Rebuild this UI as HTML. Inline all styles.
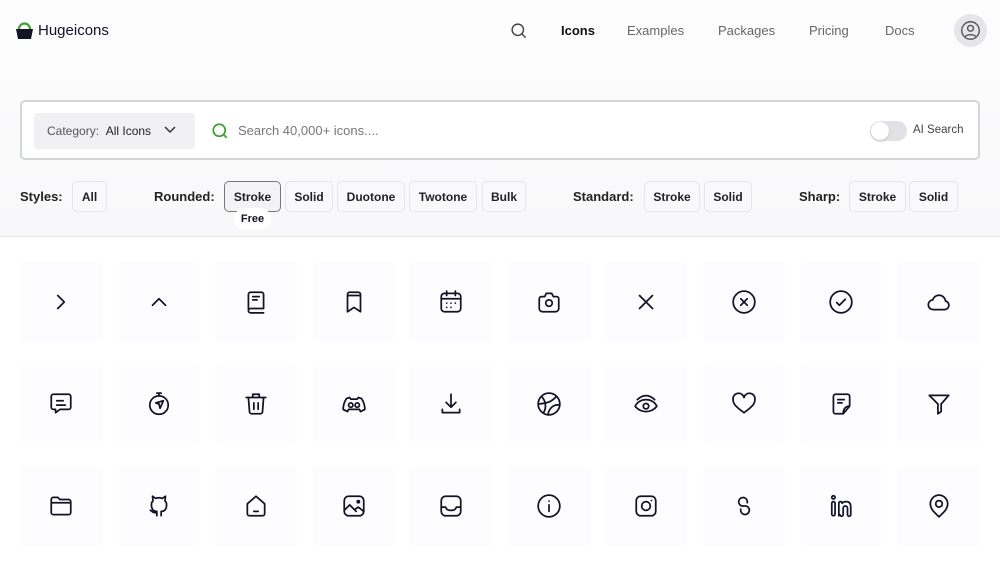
<!DOCTYPE html>
<html><head><meta charset="utf-8"><style>
*{margin:0;padding:0;box-sizing:border-box}
body{width:1000px;height:563px;overflow:hidden;background:#fff;font-family:"Liberation Sans",sans-serif;color:#141326;position:relative}
.top{position:absolute;left:0;top:0;width:1000px;height:237px;background:linear-gradient(#fdfdfd,#f8f8fa);border-bottom:1px solid #e8e8ec}
.abs{position:absolute}
.nav{font-size:13px;color:#666;top:23px}
.search{left:20px;top:100px;width:960px;height:60px;border:2px solid #d2d6d8;border-radius:5px;background:#fff}
.cat{left:12px;top:11px;width:161px;height:36px;background:#f1f1f3;border-radius:3px;font-size:12px;color:#555;padding:11px 0 0 13px}
.btn{top:181px;height:31px;border:1px solid #e6e6ea;border-radius:5px;background:#f9f9fb;font-size:12px;font-weight:bold;text-align:center;line-height:30px;color:#222}
.lab{top:189px;font-size:13px;font-weight:bold;color:#222}
.tile{position:absolute;width:82px;height:82px;background:#fdfcff;border-radius:4px}
.tile svg{position:absolute;left:28px;top:28px;width:26px;height:26px;fill:none;stroke:#141326;stroke-width:1.6;stroke-linecap:round;stroke-linejoin:round}
</style></head><body>
<div class="top"></div>
<svg class="abs" style="left:15px;top:21px" width="19" height="19" viewBox="0 0 19 19"><path d="M4 8 A5.5 5.5 0 0 1 15 8" stroke="#3aa335" stroke-width="2.2" fill="none"/><path d="M1 8 H18 L16 18 H3 Z" fill="#141326"/></svg>
<div class="abs" style="left:38px;top:22px;font-size:15px;color:#141326">Hugeicons</div>
<svg class="abs" style="left:510px;top:22px" width="17" height="17" viewBox="0 0 24 24" fill="none" stroke="#444" stroke-width="2"><circle cx="11" cy="11" r="8"/><path d="M17 17l5 5"/></svg>
<div class="abs nav" style="left:561px;color:#111;font-weight:bold">Icons</div>
<div class="abs nav" style="left:627px">Examples</div>
<div class="abs nav" style="left:718px">Packages</div>
<div class="abs nav" style="left:809px">Pricing</div>
<div class="abs nav" style="left:885px">Docs</div>
<div class="abs" style="left:954px;top:14px;width:33px;height:33px;border-radius:50%;background:#e6e6ea"></div>
<svg class="abs" style="left:960px;top:20px" width="21" height="21" viewBox="0 0 24 24" fill="none" stroke="#555" stroke-width="1.6"><circle cx="12" cy="12" r="10"/><circle cx="12" cy="9.5" r="3.3"/><path d="M6 19c2-3 10-3 12 0"/></svg>
<div class="abs search">
<div class="abs cat">Category: <span style="color:#222">&nbsp;All Icons</span></div>
<svg class="abs" style="left:142px;top:24px" width="12" height="8" viewBox="0 0 12 8" fill="none" stroke="#333" stroke-width="1.5"><path d="M1 1l5 5 5-5"/></svg>
<svg class="abs" style="left:189px;top:20px" width="18" height="18" viewBox="0 0 24 24" fill="none" stroke="#3aa335" stroke-width="2.3"><circle cx="11" cy="11" r="8"/><path d="M17 17l4 4"/></svg>
<div class="abs" style="left:216px;top:21px;font-size:13px;color:#777">Search 40,000+ icons....</div>
<div class="abs" style="left:848px;top:19px;width:37px;height:20px;border-radius:10px;background:#e2e2e6"></div>
<div class="abs" style="left:849px;top:20px;width:18px;height:18px;border-radius:50%;background:#fff;box-shadow:0 1px 2px #bbb"></div>
<div class="abs" style="left:891px;top:22px;font-size:11.5px;color:#444">AI Search</div>
</div>
<div class="abs lab" style="left:20px">Styles:</div>
<div class="abs btn" style="left:72px;width:35px">All</div>
<div class="abs lab" style="left:154px">Rounded:</div>
<div class="abs btn" style="left:224px;width:57px;border-color:#777;background:#f3f3f5">Stroke</div>
<div class="abs btn" style="left:285px;width:48px">Solid</div>
<div class="abs btn" style="left:337px;width:68px">Duotone</div>
<div class="abs btn" style="left:409px;width:68px">Twotone</div>
<div class="abs btn" style="left:482px;width:44px">Bulk</div>
<div class="abs" style="left:234px;top:208px;width:37px;height:22px;border-radius:11px;background:#fff;font-size:11px;font-weight:bold;text-align:center;line-height:22px">Free</div>
<div class="abs lab" style="left:573px">Standard:</div>
<div class="abs btn" style="left:644px;width:56px">Stroke</div>
<div class="abs btn" style="left:704px;width:48px">Solid</div>
<div class="abs lab" style="left:799px">Sharp:</div>
<div class="abs btn" style="left:849px;width:57px">Stroke</div>
<div class="abs btn" style="left:909px;width:49px">Solid</div>

<!-- row1 -->
<div class="tile" style="left:20px;top:261px"><svg viewBox="0 0 24 24"><path d="M9 6l6 6-6 6"/></svg></div>
<div class="tile" style="left:118px;top:261px"><svg viewBox="0 0 24 24"><path d="M6 15l6-6 6 6"/></svg></div>
<div class="tile" style="left:215px;top:261px"><svg viewBox="0 0 24 24"><path d="M5 19V5a2 2 0 0 1 2-2h10a2 2 0 0 1 2 2v13H7a2 2 0 0 0 0 4h12M9 7h6M9 10h4"/></svg></div>
<div class="tile" style="left:313px;top:261px"><svg viewBox="0 0 24 24"><path d="M6 21V5a2 2 0 0 1 2-2h8a2 2 0 0 1 2 2v16l-6-4zM6 6h12"/></svg></div>
<div class="tile" style="left:410px;top:261px"><svg viewBox="0 0 24 24"><rect x="3" y="4" width="18" height="17" rx="3"/><path d="M3 9h18M8 2v4M16 2v4M8 13h.01M12 13h.01M16 13h.01M8 17h.01M12 17h.01"/></svg></div>
<div class="tile" style="left:508px;top:261px"><svg viewBox="0 0 24 24"><path d="M3 9a2 2 0 0 1 2-2h3l1.5-3h5L16 7h3a2 2 0 0 1 2 2v9a3 3 0 0 1-3 3H6a3 3 0 0 1-3-3z"/><circle cx="12" cy="13" r="3"/></svg></div>
<div class="tile" style="left:605px;top:261px"><svg viewBox="0 0 24 24"><path d="M6 6l12 12M18 6L6 18"/></svg></div>
<div class="tile" style="left:703px;top:261px"><svg viewBox="0 0 24 24"><circle cx="12" cy="12" r="10"/><path d="M9 9l6 6M15 9l-6 6"/></svg></div>
<div class="tile" style="left:800px;top:261px"><svg viewBox="0 0 24 24"><circle cx="12" cy="12" r="10"/><path d="M8 12.5l2.5 2.5L16 9.5"/></svg></div>
<div class="tile" style="left:898px;top:261px"><svg viewBox="0 0 24 24"><path d="M7 19h10a4 4 0 0 0 1-7.9A6 6 0 0 0 6.3 10 4.5 4.5 0 0 0 7 19z"/></svg></div>
<!-- row2 -->
<div class="tile" style="left:20px;top:363px"><svg viewBox="0 0 24 24"><path d="M3 5a2 2 0 0 1 2-2h14a2 2 0 0 1 2 2v10a2 2 0 0 1-2 2h-8l-4 3v-3H5a2 2 0 0 1-2-2zM8 9h6M8 13h8"/></svg></div>
<div class="tile" style="left:118px;top:363px"><svg viewBox="0 0 24 24"><circle cx="12" cy="13" r="8.5"/><path d="M10 2h4M12 2v2.5M9 11l7-2-3 7-1-4z"/></svg></div>
<div class="tile" style="left:215px;top:363px"><svg viewBox="0 0 24 24"><path d="M3 6h18M9 6V3h6v3M5 6l1 13a2 2 0 0 0 2 2h8a2 2 0 0 0 2-2l1-13M10 11v6M14 11v6"/></svg></div>
<div class="tile" style="left:313px;top:363px"><svg viewBox="0 0 24 24"><path d="M8 6l-3 1c-2 3-3 7-3 10l4 2 1-2h10l1 2 4-2c0-3-1-7-3-10l-3-1-1 1.5h-6z"/><circle cx="9" cy="13" r="2"/><circle cx="15" cy="13" r="2"/></svg></div>
<div class="tile" style="left:410px;top:363px"><svg viewBox="0 0 24 24"><path d="M12 3v12M7.5 10.5L12 15l4.5-4.5M4 17v3h16v-3"/></svg></div>
<div class="tile" style="left:508px;top:363px"><svg viewBox="0 0 24 24"><circle cx="12" cy="12" r="10"/><path d="M5 5c4 4 5 10 2 15M19 5c-4 4-6 6-17 7M22 13c-6-1-10 3-11 9"/></svg></div>
<div class="tile" style="left:605px;top:363px"><svg viewBox="0 0 24 24"><path d="M2 14c2-4 6-6 10-6s8 2 10 6c-2 3-6 5-10 5s-8-2-10-5zM4 8c5-5 11-5 16 0"/><circle cx="12" cy="14" r="2.5"/></svg></div>
<div class="tile" style="left:703px;top:363px"><svg viewBox="0 0 24 24"><path d="M12 20C5 15 2 12 2 8.5A4.8 4.8 0 0 1 12 6a4.8 4.8 0 0 1 10 2.5C22 12 19 15 12 20z"/></svg></div>
<div class="tile" style="left:800px;top:363px"><svg viewBox="0 0 24 24"><path d="M20 14V5a2 2 0 0 0-2-2H7a2 2 0 0 0-2 2v14a2 2 0 0 0 2 2h7zM14 21c0-4 2-7 6-7M9 8h6M9 11h4"/></svg></div>
<div class="tile" style="left:898px;top:363px"><svg viewBox="0 0 24 24"><path d="M3 4h18l-7 8v7l-3 2v-9z"/></svg></div>
<!-- row3 -->
<div class="tile" style="left:20px;top:465px"><svg viewBox="0 0 24 24"><path d="M3 6a2 2 0 0 1 2-2h4l2 2h8a2 2 0 0 1 2 2v10a2 2 0 0 1-2 2H5a2 2 0 0 1-2-2zM3 9h18"/></svg></div>
<div class="tile" style="left:118px;top:465px"><svg viewBox="0 0 24 24"><path d="M10 21v-4c-3 0-5-2-5-6 0-2 .5-3 1.5-3.5L6 3l3 2a8 8 0 0 1 6 0l3-2-.5 4.5c1 .5 1.5 1.5 1.5 3.5 0 4-2 6-5 6v4M10 18c-3 1-4-1-6-2"/></svg></div>
<div class="tile" style="left:215px;top:465px"><svg viewBox="0 0 24 24"><path d="M4 10l8-7 8 7v9a2 2 0 0 1-2 2H6a2 2 0 0 1-2-2zM10 17h4"/></svg></div>
<div class="tile" style="left:313px;top:465px"><svg viewBox="0 0 24 24"><rect x="3" y="3" width="18" height="18" rx="4"/><circle cx="16" cy="8" r="1"/><path d="M3 16l5-5 6 6M13 15l3-2 5 4"/></svg></div>
<div class="tile" style="left:410px;top:465px"><svg viewBox="0 0 24 24"><rect x="3" y="3" width="18" height="18" rx="4"/><path d="M3 13h4c1 3 3 3 5 3s4 0 5-3h4"/></svg></div>
<div class="tile" style="left:508px;top:465px"><svg viewBox="0 0 24 24"><circle cx="12" cy="12" r="10"/><path d="M12 11v6M12 7.5h.01"/></svg></div>
<div class="tile" style="left:605px;top:465px"><svg viewBox="0 0 24 24"><rect x="3" y="3" width="18" height="18" rx="4"/><circle cx="12" cy="12" r="4"/><path d="M17 7h.01"/></svg></div>
<div class="tile" style="left:703px;top:465px"><svg viewBox="0 0 24 24"><path d="M15 9a4 4 0 1 0-5 3M9 15a4 4 0 1 0 5-3M10 12l4 0"/></svg></div>
<div class="tile" style="left:800px;top:465px"><svg viewBox="0 0 24 24"><circle cx="5" cy="4" r="1.5"/><rect x="3.5" y="8" width="3" height="13" rx="1.5"/><path d="M10 21V9.5a1.5 1.5 0 0 1 3 0c1-1.5 3-1.5 4-1.5 3 0 4 2 4 5v7a1.5 1.5 0 0 1-3 0v-6a2 2 0 0 0-4 0v6a1.5 1.5 0 0 1-3 0"/></svg></div>
<div class="tile" style="left:898px;top:465px"><svg viewBox="0 0 24 24"><path d="M12 22c-4-4-8-7-8-12a8 8 0 0 1 16 0c0 5-4 8-8 12z"/><circle cx="12" cy="10" r="3"/></svg></div>
</body></html>
